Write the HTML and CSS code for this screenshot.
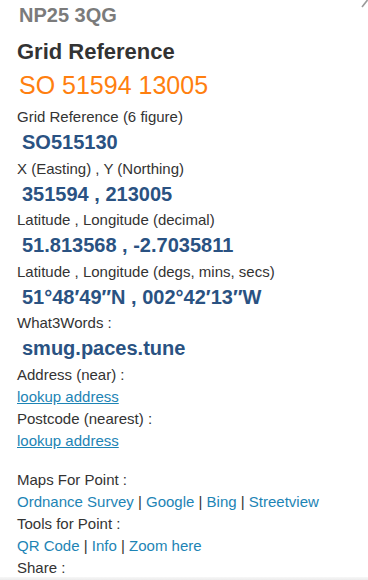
FILE: index.html
```html
<!DOCTYPE html>
<html lang="en">
<head>
<meta charset="utf-8">
<title>NP25 3QG - Grid Reference</title>
<link rel="stylesheet" href="styles.css">
</head>
<body>
<div class="panel">
  <span class="corner" aria-hidden="true"><svg width="8" height="9" viewBox="0 0 8 9"><path d="M7.5 0 L2 7" stroke="#9a9a9a" stroke-width="1.6" fill="none"/></svg></span>
  <div class="postcode">NP25 3QG</div>
  <h2 class="title">Grid Reference</h2>
  <div class="gridref">SO 51594 13005</div>

  <div class="label">Grid Reference (6 figure)</div>
  <div class="value">SO515130</div>
  <div class="label">X (Easting) , Y (Northing)</div>
  <div class="value">351594 , 213005</div>
  <div class="label">Latitude , Longitude (decimal)</div>
  <div class="value">51.813568 , -2.7035811</div>
  <div class="label">Latitude , Longitude (degs, mins, secs)</div>
  <div class="value">51°48′49″N , 002°42′13″W</div>
  <div class="label">What3Words :</div>
  <div class="value">smug.paces.tune</div>
  <div class="label">Address (near) :</div>
  <div class="line"><a class="ulink" href="#">lookup address</a></div>
  <div class="label">Postcode (nearest) :</div>
  <div class="line"><a class="ulink" href="#">lookup address</a></div>

  <div class="label spaced">Maps For Point :</div>
  <div class="line"><a href="#">Ordnance Survey</a> | <a href="#">Google</a> | <a href="#">Bing</a> | <a href="#">Streetview</a></div>
  <div class="label">Tools for Point :</div>
  <div class="line"><a href="#">QR Code</a> | <a href="#">Info</a> | <a href="#">Zoom here</a></div>
  <div class="label">Share :</div>
</div>
<div class="bottom-edge"></div>
</body>
</html>
```

FILE: styles.css
```css
html, body {
  margin: 0;
  padding: 0;
  background: #fff;
}
body {
  font-family: "Liberation Sans", Arial, sans-serif;
  color: #333;
  overflow: hidden;
}
.panel {
  position: relative;
  padding: 3px 10px 0 17px;
}
.corner {
  position: absolute;
  top: 0;
  right: 0;
  line-height: 0;
}
.postcode {
  font-size: 20px;
  font-weight: bold;
  line-height: 24px;
  color: #7b7b7b;
  padding-left: 2px;
}
.title {
  margin: 12px 0 0;
  font-size: 22px;
  font-weight: bold;
  line-height: 26px;
  color: #333;
}
.gridref {
  margin-top: 5px;
  font-size: 25px;
  line-height: 30px;
  color: #ff7f0f;
  padding-left: 2px;
}
.gridref + .label {
  margin-top: 6px;
}
.label, .line {
  font-size: 15px;
  line-height: 22px;
  color: #333;
}
.value {
  font-size: 20px;
  font-weight: bold;
  line-height: 29.5px;
  color: #2a5282;
  padding-left: 5px;
}
a {
  color: #1d84b5;
  text-decoration: none;
}
a.ulink {
  text-decoration: underline;
}
.spaced {
  margin-top: 17px;
}
.bottom-edge {
  position: fixed;
  left: 0;
  right: 0;
  bottom: 0;
  height: 3px;
  background: linear-gradient(#f7f7f7, #ececec);
}
```
